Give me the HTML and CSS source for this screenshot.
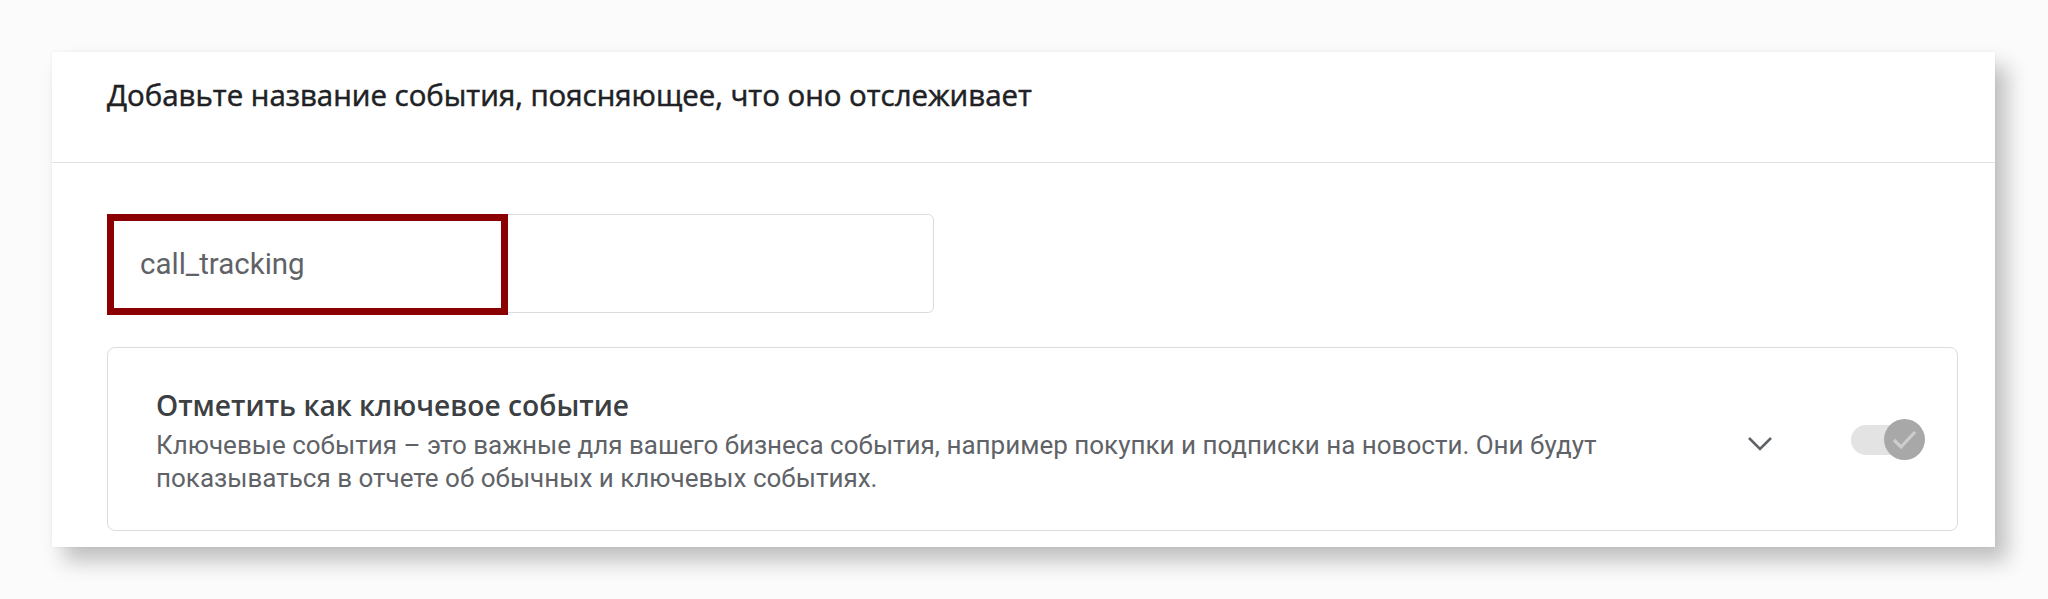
FILE: index.html
```html
<!DOCTYPE html>
<html lang="ru">
<head>
<meta charset="utf-8">
<title>Событие</title>
<link rel="stylesheet" href="styles.css">
</head>
<body>
<div class="card">
  <div class="card-header">Добавьте название события, поясняющее, что оно отслеживает</div>
  <div class="card-body">
    <div class="field">
      <div class="field-input">call_tracking</div>
      <div class="highlight"></div>
    </div>
    <div class="option">
      <div class="option-text">
        <div class="option-title">Отметить как ключевое событие</div>
        <div class="option-desc">Ключевые события – это важные для вашего бизнеса события, например покупки и подписки на новости. Они будут показываться в отчете об обычных и ключевых событиях.</div>
      </div>
      <svg class="chevron" width="26" height="16" viewBox="0 0 26 16"><path d="M2 2 L13 13 L24 2" fill="none" stroke="#5f6368" stroke-width="2.6"/></svg>
      <div class="toggle">
        <div class="track"></div>
        <div class="knob"><svg width="41" height="41" viewBox="0 0 41 41"><path d="M10 21 L17 28 L31 13" fill="none" stroke="#cdcdcd" stroke-width="3.2"/></svg></div>
      </div>
    </div>
  </div>
</div>
</body>
</html>
```
FILE: styles.css
```css
html, body {
  margin: 0;
  padding: 0;
  background: #fbfbfb;
}
body {
  padding: 52px 0 0 52px;
  height: 599px;
  box-sizing: border-box;
  overflow: hidden;
}
.card {
  width: 1943px;
  height: 495px;
  background: #ffffff;
  box-shadow: 0 0 3px rgba(0,0,0,0.06), 12px 14px 20px rgba(0,0,0,0.24);
  box-sizing: border-box;
}
.card-header {
  height: 111px;
  box-sizing: border-box;
  padding: 23px 0 0 55px;
  border-bottom: 1px solid #e2e2e2;
  font-family: "Open Sans", sans-serif;
  font-weight: 400;
  font-size: 29.4px;
  line-height: 40px;
  color: #202124;
  -webkit-text-stroke: 0.5px #202124;
}
.card-body {
  padding: 51px 37px 16px 55px;
}
.field {
  position: relative;
  width: 827px;
  height: 99px;
}
.field-input {
  box-sizing: border-box;
  width: 100%;
  height: 100%;
  border: 1px solid #dadce0;
  border-radius: 6px;
  padding: 0 0 0 32px;
  display: flex;
  align-items: center;
  font-family: "Roboto", sans-serif;
  font-size: 29.5px;
  color: #5f6368;
}
.highlight {
  position: absolute;
  left: 0;
  top: 0;
  width: 401px;
  height: 101px;
  box-sizing: border-box;
  border: 7px solid #8b0000;
}
.option {
  margin-top: 34px;
  height: 184px;
  box-sizing: border-box;
  border: 1px solid #dadce0;
  border-radius: 8px;
  display: flex;
  align-items: center;
  padding: 0 32px 0 48px;
}
.option-text {
  flex: 1;
  max-width: 1520px;
  padding-top: 2px;
}
.option-title {
  font-family: "Open Sans", sans-serif;
  font-weight: 600;
  font-size: 28.2px;
  line-height: 40px;
  color: #3c4043;
  margin-bottom: 4px;
}
.option-desc {
  font-family: "Roboto", sans-serif;
  font-size: 26px;
  line-height: 33px;
  color: #5f6368;
}
.chevron {
  margin-left: auto;
  margin-right: 78px;
  margin-top: 10px;
}
.toggle {
  position: relative;
  width: 74px;
  height: 41px;
}
.track {
  position: absolute;
  left: 0;
  top: 6px;
  width: 66px;
  height: 30px;
  border-radius: 15px;
  background: #e3e3e3;
}
.knob {
  position: absolute;
  right: 0;
  top: 0;
  width: 41px;
  height: 41px;
  border-radius: 50%;
  background: #a8a8a8;
}
.knob svg {
  display: block;
}
```
